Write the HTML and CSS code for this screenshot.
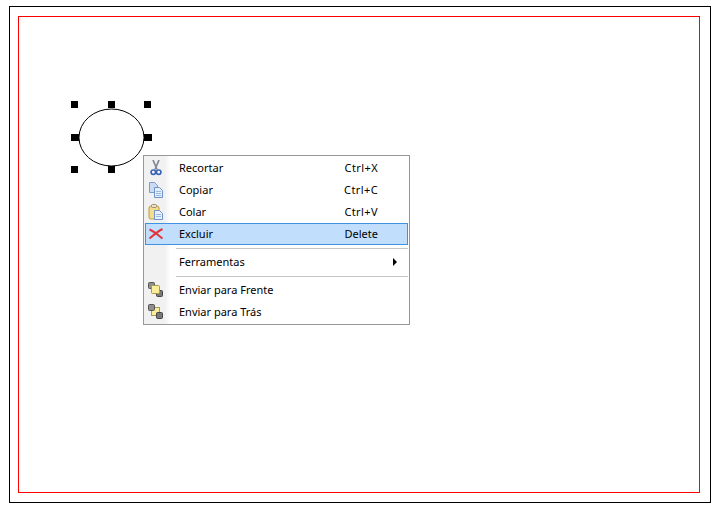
FILE: index.html
```html
<!DOCTYPE html>
<html lang="pt">
<head>
<meta charset="utf-8">
<title>Menu de contexto</title>
<link rel="stylesheet" href="styles.css">
</head>
<body>
<div class="sheet">
  <div class="canvas">
    <svg class="shape" width="100" height="90" viewBox="0 0 100 90">
      <ellipse cx="40.500" cy="36.500" rx="32.500" ry="28.500" fill="#fff" stroke="#000" stroke-width="1"/>
      <g fill="#000">
        <rect x="0" y="0" width="7" height="7"/><rect x="37" y="0" width="7" height="7"/><rect x="73" y="0" width="7" height="7"/>
        <rect x="0" y="33" width="8" height="7"/><rect x="73" y="33" width="8" height="7"/>
        <rect x="0" y="65" width="7" height="7"/><rect x="37" y="65" width="7" height="7"/>
      </g>
    </svg>
    <div class="menu">
      <div class="item">
        <span class="icon"><svg width="16" height="16" viewBox="0 0 16 16"><path d="M5 0l4 9.500M11 0L7 9.500" fill="none" stroke="#7f8894" stroke-width="1.700"/><circle cx="5.300" cy="12.200" r="2.200" fill="#fff" stroke="#3a64b8" stroke-width="1.700"/><circle cx="10.700" cy="12.200" r="2.200" fill="#fff" stroke="#3a64b8" stroke-width="1.700"/></svg></span>
        <span class="label">Recortar</span><span class="key wide">Ctrl+X</span>
      </div>
      <div class="item">
        <span class="icon"><svg width="16" height="16" viewBox="0 0 16 16"><path d="M1.500 .5h5l3 3v7h-8z" fill="#c9dcf4" stroke="#7d9cc9"/><path d="M6.500 5.500h5l3 3v7h-8z" fill="#e4eefb" stroke="#6f93c8"/><path d="M8 9.500h5M8 11.500h5M8 13.500h5" stroke="#9db8de"/></svg></span>
        <span class="label">Copiar</span><span class="key wide">Ctrl+C</span>
      </div>
      <div class="item">
        <span class="icon"><svg width="16" height="16" viewBox="0 0 16 16"><rect x="1" y="2" width="10" height="13" rx="2" fill="#f5dd8e" stroke="#b99b4a"/><rect x="3.500" y=".5" width="5" height="3" rx="1" fill="#e8e3d0" stroke="#9a8e6a"/><path d="M6.500 6.500h5l3 3v6h-8z" fill="#e8f0fb" stroke="#6f93c8"/><path d="M8 10.500h5M8 12.500h5" stroke="#9db8de"/></svg></span>
        <span class="label">Colar</span><span class="key wide">Ctrl+V</span>
      </div>
      <div class="item selected">
        <span class="icon"><svg width="16" height="16" viewBox="0 0 16 16"><path d="M1.500 3.500c4 1.500 8 5 13 9M14.500 3c-4 2-9 6-13 9.500" fill="none" stroke="#e2363c" stroke-width="2"/></svg></span>
        <span class="label">Excluir</span><span class="key">Delete</span>
      </div>
      <div class="sep"></div>
      <div class="item">
        <span class="icon"></span>
        <span class="label">Ferramentas</span><span class="arrow"></span>
      </div>
      <div class="sep"></div>
      <div class="item">
        <span class="icon"><svg width="16" height="16" viewBox="0 0 16 16"><rect x=".5" y=".5" width="6" height="6" rx="1" fill="#8e8e8e" stroke="#555"/><rect x="8.500" y="8.500" width="6" height="6" rx="1" fill="#777" stroke="#444"/><rect x="3.500" y="3.500" width="8" height="8" rx="1" fill="#fbee9a" stroke="#a99a4c"/></svg></span>
        <span class="label">Enviar para Frente</span>
      </div>
      <div class="item">
        <span class="icon"><svg width="16" height="16" viewBox="0 0 16 16"><rect x="3.500" y="3.500" width="8" height="8" fill="#fbee9a" stroke="#a99a4c"/><rect x=".5" y=".5" width="6" height="6" rx="1" fill="#8e8e8e" stroke="#555"/><rect x="8.500" y="8.500" width="6" height="6" rx="1" fill="#777" stroke="#444"/></svg></span>
        <span class="label">Enviar para Trás</span>
      </div>
    </div>
  </div>
</div>
</body>
</html>
```
FILE: styles.css
```css
* { box-sizing: border-box; }
html, body { margin: 0; background: #fff; }
body { width: 716px; height: 512px; padding: 6px 5px 9px 9px; overflow: hidden; }
.sheet { width: 702px; height: 497px; border: 1px solid #000; padding: 9px 10px 9px 8px; }
.canvas { position: relative; width: 682px; height: 477px; border: 1px solid #f00; }
.shape { position: absolute; left: 52px; top: 84px; }
.menu {
  position: absolute; left: 124px; top: 138px; width: 267px; height: 170px;
  border: 1px solid #979797; padding: 1px;
  background: linear-gradient(90deg, #f1f1f1 0, #f1f1f1 21px, #fff 26px);
  font: 11px/20px "Noto Sans", sans-serif; color: #000;
}
.item { display: flex; align-items: center; height: 22px; border: 1px solid transparent; }
.item.selected { background: #c1dffc; border-color: #3e92e0; }
.icon { width: 33px; flex: none; display: flex; padding-left: 2px; }
.label { flex: 1; }
.key { margin-right: 29px; flex: none; }
.key.wide { letter-spacing: .4px; }
.arrow { width: 0; height: 0; margin-right: 10px; border-left: 4px solid #000; border-top: 4px solid transparent; border-bottom: 4px solid transparent; }
.sep { height: 6px; margin-left: 31px; padding-top: 3px; }
.sep::before { content: ""; display: block; height: 2px; background: linear-gradient(#c5c5c5 50%, #fff 50%); }
```
